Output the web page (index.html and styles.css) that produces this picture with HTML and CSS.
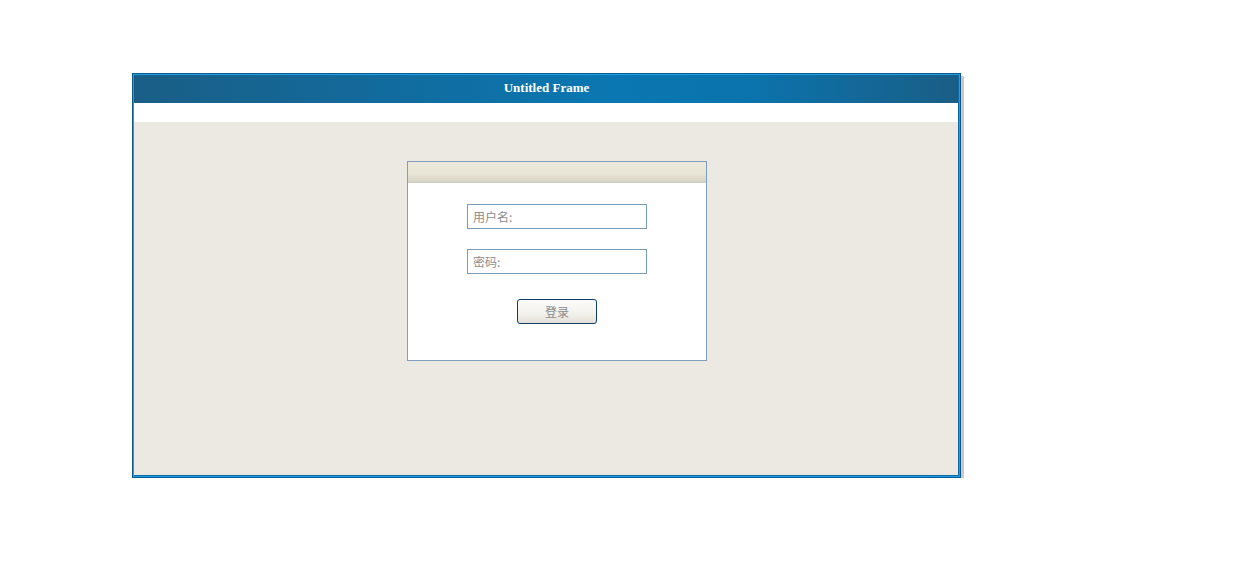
FILE: index.html
```html
<!DOCTYPE html>
<html>
<head>
<meta charset="utf-8">
<link rel="stylesheet" href="styles.css">
</head>
<body>
<div class="frame">
  <div class="frame-inner">
    <div class="frame-title">Untitled Frame</div>
    <div class="frame-strip"></div>
    <div class="frame-body">
      <div class="login">
        <div class="login-head"></div>
        <div class="login-body">
          <div class="field">用户名:</div>
          <div class="field">密码:</div>
          <div class="btn">登录</div>
        </div>
      </div>
    </div>
  </div>
</div>
</body>
</html>
```
FILE: styles.css
```css
html, body {
  margin: 0;
  padding: 0;
  background: #ffffff;
}
body {
  padding: 73px 0 0 132px;
}
.frame {
  box-sizing: border-box;
  width: 829px;
  height: 405px;
  border: 1px solid #0b5a8b;
  background: #1f9fe5;
  padding: 1px;
  box-shadow: 3px 3px 0 #c8c8c8;
}
.frame-inner {
  height: 100%;
  display: flex;
  flex-direction: column;
  border-right: 1px solid #0b6aa5;
  border-bottom: 1px solid #0b6aa5;
  box-sizing: border-box;
}
.frame-title {
  height: 28px;
  flex: none;
  background: linear-gradient(to right, #1a5e86 0%, #0a77b2 58%, #0b73ac 75%, #1a5e86 100%);
  color: #ffffff;
  font-family: "Liberation Serif", "DejaVu Serif", serif;
  font-weight: bold;
  font-size: 13px;
  line-height: 26px;
  text-align: center;
  padding-left: 1px;
}
.frame-strip {
  height: 19px;
  flex: none;
  background: #ffffff;
}
.frame-body {
  flex: 1;
  background: #ece9e2;
  padding: 39px 0 0 273px;
}
.login {
  box-sizing: border-box;
  width: 300px;
  height: 200px;
  border: 1px solid #7f9dc0;
  background: #ffffff;
}
.login-head {
  height: 20px;
  background: linear-gradient(to bottom, #ece9dc 0%, #e8e5d6 60%, #d6d3c6 100%);
  border-bottom: 1px solid #d2cfc2;
}
.login-body {
  display: flex;
  flex-direction: column;
  align-items: center;
  padding-top: 21px;
}
.field {
  box-sizing: border-box;
  width: 180px;
  height: 25px;
  border: 1px solid #7a9aba;
  padding-left: 5px;
  font-family: "Noto Sans CJK SC", sans-serif;
  font-size: 12px;
  line-height: 23px;
  color: #8c8c8c;
  margin-bottom: 20px;
}
.field + .field {
  margin-bottom: 25px;
}
.btn {
  box-sizing: border-box;
  width: 80px;
  height: 25px;
  border: 1px solid #0e3d6c;
  border-radius: 3px;
  background: linear-gradient(to bottom, #fbfbf9 0%, #f2f1ec 60%, #e2dfd5 100%);
  font-family: "Noto Sans CJK SC", sans-serif;
  font-size: 12px;
  line-height: 23px;
  color: #8a8a8a;
  text-align: center;
}
```
